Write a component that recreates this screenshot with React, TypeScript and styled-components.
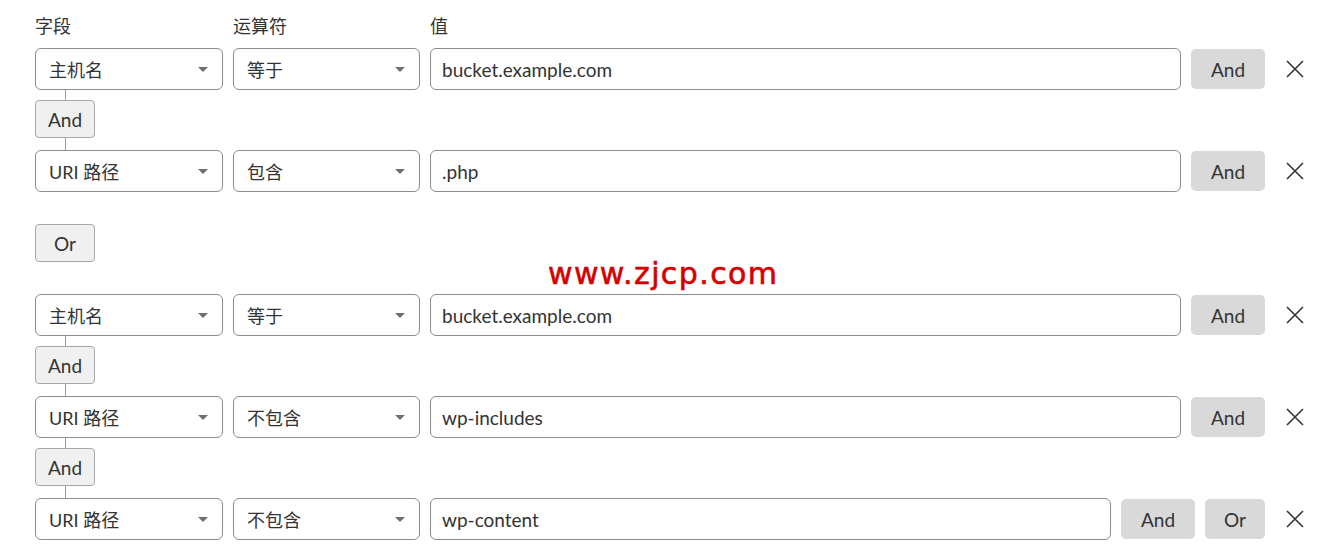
import styled, { createGlobalStyle } from 'styled-components';

const GlobalStyle = createGlobalStyle`
  html, body {
    margin: 0;
    padding: 0;
    background: #ffffff;
  }
  body {
    font-family: Lato, "Noto Sans CJK SC", sans-serif;
    color: #333333;
  }
`;

const Page = styled.div`
  position: relative;
  width: 1328px;
  height: 560px;
  box-sizing: border-box;
  padding: 14px 13px 0 35px;
  font-size: 18px;
  overflow: hidden;
`;

const Header = styled.div`
  display: flex;
  gap: 10px;
  height: 24px;
  line-height: 24px;
  margin-bottom: 10px;
`;

const Label = styled.div<{ $w?: number }>`
  width: ${({ $w }) => ($w ? `${$w}px` : 'auto')};
  flex: ${({ $w }) => ($w ? 'none' : '1')};
  font-size: 18px;
  color: #333;
`;

const Row = styled.div`
  display: flex;
  align-items: center;
  gap: 10px;
  height: 42px;
`;

const SelectBox = styled.div<{ $w: number }>`
  width: ${({ $w }) => $w}px;
  height: 42px;
  box-sizing: border-box;
  border: 1px solid #8c8c8c;
  border-radius: 6px;
  display: flex;
  align-items: center;
  justify-content: space-between;
  padding: 0 14px 0 13px;
  background: #fff;
`;

const Caret = styled.span`
  width: 0;
  height: 0;
  border-left: 5px solid transparent;
  border-right: 5px solid transparent;
  border-top: 5px solid #6f6f6f;
`;

const ValueInput = styled.div`
  flex: 1;
  height: 42px;
  box-sizing: border-box;
  border: 1px solid #8c8c8c;
  border-radius: 6px;
  display: flex;
  align-items: center;
  padding: 0 11px;
  font-size: 19px;
`;

const ActionButton = styled.button<{ $w: number }>`
  width: ${({ $w }) => $w}px;
  height: 40px;
  border: none;
  border-radius: 5px;
  background: #d9d9d9;
  color: #333;
  font-family: Lato, "Noto Sans CJK SC", sans-serif;
  font-size: 19px;
  padding: 0;
`;

const CloseButton = styled.button`
  width: 40px;
  height: 40px;
  border: none;
  background: transparent;
  display: flex;
  align-items: center;
  justify-content: center;
  padding: 0;
`;

const Connector = styled.div`
  width: 60px;
  display: flex;
  flex-direction: column;
  align-items: center;
`;

const Line = styled.div<{ $h: number }>`
  width: 1px;
  height: ${({ $h }) => $h}px;
  background: #9a9a9a;
`;

const LinkButton = styled.button`
  width: 60px;
  height: 38px;
  box-sizing: border-box;
  border: 1px solid #a8a8a8;
  border-radius: 4px;
  background: #f0f0f0;
  color: #333;
  font-family: Lato, "Noto Sans CJK SC", sans-serif;
  font-size: 19px;
  padding: 0;
`;

const GroupSep = styled.div`
  margin: 32px 0;
`;

const Watermark = styled.div`
  position: absolute;
  left: 548px;
  top: 256px;
  font-family: "DejaVu Sans", sans-serif;
  font-size: 30px;
  letter-spacing: 1.4px;
  color: #d40000;
  -webkit-text-stroke: 0.6px #d40000;
`;

type Cond = { field: string; op: string; value: string; actions: string[] };

const groups: Cond[][] = [
  [
    { field: '主机名', op: '等于', value: 'bucket.example.com', actions: ['And'] },
    { field: 'URI 路径', op: '包含', value: '.php', actions: ['And'] },
  ],
  [
    { field: '主机名', op: '等于', value: 'bucket.example.com', actions: ['And'] },
    { field: 'URI 路径', op: '不包含', value: 'wp-includes', actions: ['And'] },
    { field: 'URI 路径', op: '不包含', value: 'wp-content', actions: ['And', 'Or'] },
  ],
];

function CloseIcon() {
  return (
    <svg width="18" height="18" viewBox="0 0 18 18">
      <path d="M1 1 L17 17 M17 1 L1 17" stroke="#333" strokeWidth="1.6" fill="none" />
    </svg>
  );
}

function ConditionRow({ c }: { c: Cond }) {
  return (
    <Row>
      <SelectBox $w={188}>
        <span>{c.field}</span>
        <Caret />
      </SelectBox>
      <SelectBox $w={187}>
        <span>{c.op}</span>
        <Caret />
      </SelectBox>
      <ValueInput>{c.value}</ValueInput>
      {c.actions.map((a) => (
        <ActionButton key={a} $w={a === 'Or' ? 60 : 74}>
          {a}
        </ActionButton>
      ))}
      <CloseButton>
        <CloseIcon />
      </CloseButton>
    </Row>
  );
}

export default function App() {
  return (
    <>
      <GlobalStyle />
      <Page>
        <Header>
          <Label $w={188}>字段</Label>
          <Label $w={187}>运算符</Label>
          <Label>值</Label>
        </Header>
        {groups.map((g, gi) => (
          <div key={gi}>
            {gi > 0 && (
              <GroupSep>
                <LinkButton>Or</LinkButton>
              </GroupSep>
            )}
            {g.map((c, ci) => (
              <div key={ci}>
                {ci > 0 && (
                  <Connector>
                    <Line $h={10} />
                    <LinkButton>And</LinkButton>
                    <Line $h={12} />
                  </Connector>
                )}
                <ConditionRow c={c} />
              </div>
            ))}
          </div>
        ))}
        <Watermark>www.zjcp.com</Watermark>
      </Page>
    </>
  );
}
